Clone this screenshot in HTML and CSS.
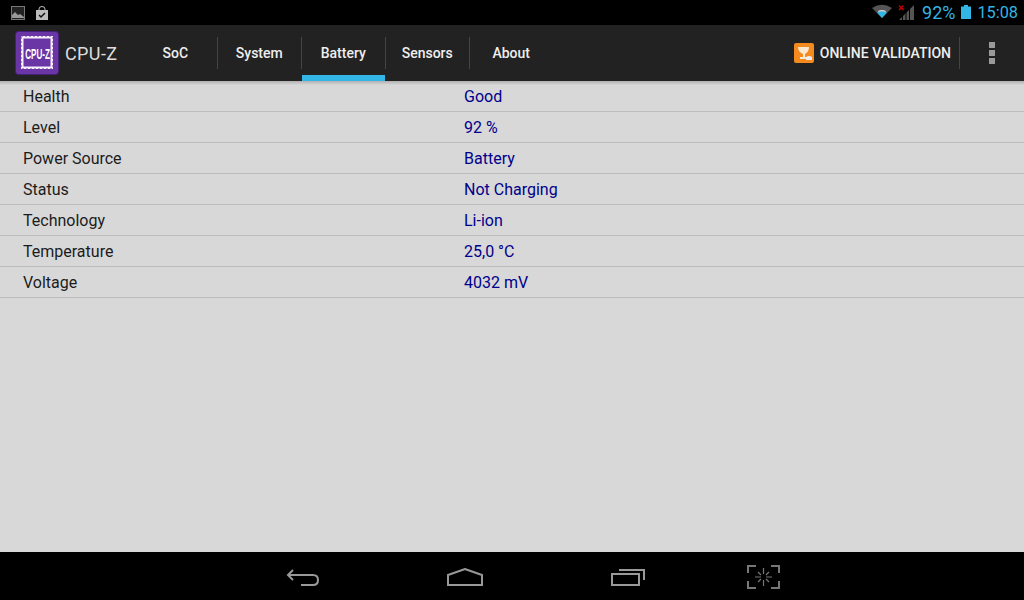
FILE: index.html
```html
<!DOCTYPE html>
<html lang="en">

<head>
    <meta charset="UTF-8">
    <title>CPU-Z</title>
    <link rel="stylesheet" href="styles.css">
</head>

<body>
    <div class="status-bar">
        <div class="status-left">
            <svg width="14" height="14" viewBox="0 0 14 14">
                <rect x="0.5" y="0.5" width="13" height="13" fill="#222" stroke="#777" />
                <path d="M1 12V9l3-3 3 3 2-1 4 3v1z" fill="#999" />
            </svg>
            <svg width="14" height="14" viewBox="0 0 14 14">
                <path d="M1 4h12v10H1z" fill="#bbb" />
                <path d="M4 5V3a3 2.500 0 0 1 6 0v2" fill="none" stroke="#bbb" />
                <path d="M4 9l2 2 4-4" fill="none" stroke="#111" stroke-width="1.500" />
            </svg>
        </div>
        <div class="status-right">
            <svg class="wifi" width="20" height="14" viewBox="0 0 20 14">
                <path d="M0 4Q10-2.500 20 4L10 14z" fill="#555" />
                <path d="M5 8.500Q10 5.500 15 8.500L10 14z" fill="#33b5e5" />
                <path d="M6 7Q10 5 14 7L13.500 8Q10 6.500 6.500 8z" fill="#ddd" />
            </svg>
            <svg class="signal" width="16" height="15" viewBox="0 0 16 15">
                <path d="M1 15L16 0v15z" fill="#555" />
                <path d="M4.500 15v-4M8 15V7M11.500 15V3" stroke="#000" stroke-width="1" />
                <path d="M1 0.500l4.500 4.500M5.500 0.500L1 5" stroke="#c00" stroke-width="1.400" />
            </svg>
            <span class="battery-pct">92%</span>
            <svg class="battery" width="10" height="14" viewBox="0 0 10 14">
                <path d="M3 0h4v1.500h3V14H0V1.500h3z" fill="#33b5e5" />
            </svg>
            <span class="clock">15:08</span>
        </div>
    </div>

    <div class="action-bar">
        <div class="brand">
            <svg class="logo" width="44" height="44" viewBox="0 0 44 44">
                <rect x="0.500" y="0.500" width="43" height="43" rx="3" fill="#6a35a5" stroke="#45207a" />
                <rect x="6" y="5" width="32" height="33" fill="#f4effa" />
                <rect x="8.500" y="7.500" width="27" height="28" fill="#6a35a5" />
                <rect x="6.500" y="5.500" width="31" height="32" fill="none" stroke="#6a35a5" stroke-width="1" stroke-dasharray="1 3" />
                <text transform="translate(22.500 27.500) scale(0.540 1)" text-anchor="middle" class="logo-text">CPU-Z</text>
            </svg>
            <span class="app-name">CPU-Z</span>
        </div>
        <nav class="tabs">
            <a class="tab">SoC</a>
            <a class="tab">System</a>
            <a class="tab tab-active">Battery</a>
            <a class="tab">Sensors</a>
            <a class="tab tab-last">About</a>
        </nav>
        <div class="actions">
            <a class="validate">
                <svg width="20" height="20" viewBox="0 0 20 20">
                    <rect width="20" height="20" rx="2" fill="#f58a1f" />
                    <path d="M4 4h11q0 5-4 7v3h3v2H6v-2h3v-3Q4 9 4 4z" fill="#fde9cf" />
                    <path d="M12 14q3-2 6 0v3h-6z" fill="#eee" />
                </svg>
                <span>ONLINE VALIDATION</span>
            </a>
            <div class="overflow">
                <i></i><i></i><i></i>
            </div>
        </div>
    </div>

    <div class="content">
        <div class="row"><span class="label">Health</span><span class="value">Good</span></div>
        <div class="row"><span class="label">Level</span><span class="value">92 %</span></div>
        <div class="row"><span class="label">Power Source</span><span class="value">Battery</span></div>
        <div class="row"><span class="label">Status</span><span class="value">Not Charging</span></div>
        <div class="row"><span class="label">Technology</span><span class="value">Li-ion</span></div>
        <div class="row"><span class="label">Temperature</span><span class="value">25,0 °C</span></div>
        <div class="row"><span class="label">Voltage</span><span class="value">4032 mV</span></div>
    </div>

    <div class="nav-bar">
        <svg width="34" height="18" viewBox="0 0 34 18">
            <path d="M2 7h25q5 0 5 5q0 5-5 5H15M7 2L2 7l5 5" fill="none" stroke="#999" stroke-width="2" />
        </svg>
        <svg width="37" height="18" viewBox="0 0 37 18">
            <path d="M1 7L18 1l17 6v10H1z" fill="none" stroke="#999" stroke-width="2" />
        </svg>
        <svg width="34" height="18" viewBox="0 0 34 18">
            <rect x="1" y="6" width="27" height="11" fill="none" stroke="#999" stroke-width="2" />
            <path d="M8 2h25v10" fill="none" stroke="#999" stroke-width="2" />
        </svg>
        <svg class="nav-scan" width="33" height="24" viewBox="0 0 33 24">
            <path d="M9 1H1v7M24 1h8v7M9 23H1v-7M24 23h8v-7" fill="none" stroke="#777" stroke-width="2" />
            <path d="M16.500 3v6M16.500 15v6M8 12h6M19 12h6M11 7l3 3M22 7l-3 3M11 17l3-3M22 17l-3-3" fill="none" stroke="#777" stroke-width="1.200" />
        </svg>
    </div>
</body>

</html>
```
FILE: styles.css
```css
* {
    margin: 0;
    padding: 0;
    box-sizing: border-box;
}

body {
    width: 1024px;
    height: 600px;
    display: flex;
    flex-direction: column;
    overflow: hidden;
    background: #d8d8d8;
    font-family: Roboto, sans-serif;
}

/* Status bar */
.status-bar {
    height: 25px;
    flex-shrink: 0;
    background: #000;
    display: flex;
    justify-content: space-between;
    align-items: center;
    padding: 0 6px 0 11px;
}

.status-left {
    display: flex;
    gap: 10px;
}

.status-right {
    display: flex;
    align-items: center;
    color: #33b5e5;
}

.wifi {
    margin: 0 6px 3px 0;
}

.signal {
    margin: 0 8px 1px 0;
}

.battery-pct {
    font-size: 18px;
}

.battery {
    margin: 0 6px 1px 6px;
}

.clock {
    font-size: 16.3px;
}

/* Action bar */
.action-bar {
    height: 56px;
    flex-shrink: 0;
    background: #222;
    display: flex;
    color: #eee;
}

.brand {
    width: 134px;
    display: flex;
    align-items: center;
    padding-left: 15px;
}

.logo {
    flex-shrink: 0;
}

.logo-text {
    font-family: "Liberation Sans", sans-serif;
    font-size: 15px;
    font-weight: bold;
    fill: #fff;
}

.app-name {
    margin-left: 6px;
    font-size: 18px;
    letter-spacing: 0.4px;
    color: #ddd;
}

.tabs {
    display: flex;
}

.tab {
    width: 84px;
    padding-right: 1.5px;
    display: flex;
    align-items: center;
    justify-content: center;
    font-size: 14px;
    font-weight: 500;
    position: relative;
}

.tab::after {
    content: "";
    position: absolute;
    right: 0;
    top: 12px;
    height: 32px;
    width: 1px;
    background: #444;
}

.tab-last::after {
    display: none;
}

.tab-active::before {
    content: "";
    position: absolute;
    left: 0;
    right: 1px;
    bottom: 0;
    height: 6px;
    background: #33b5e5;
}

.actions {
    margin-left: auto;
    display: flex;
    align-items: center;
}

.validate {
    display: flex;
    align-items: center;
    gap: 6px;
    height: 32px;
    padding-right: 8px;
    border-right: 1px solid #444;
    font-size: 14px;
    font-weight: 500;
}

.overflow {
    width: 64px;
    display: flex;
    flex-direction: column;
    align-items: center;
    gap: 2px;
}

.overflow i {
    width: 6px;
    height: 6px;
    background: #999;
}

/* Battery rows */
.content {
    flex: 1;
    background: linear-gradient(to bottom, #b0b0b0, #d8d8d8 4px);
}

.row {
    height: 31px;
    display: flex;
    align-items: center;
    padding-left: 23px;
    border-bottom: 1px solid #bdbdbd;
    font-size: 16px;
}

.label {
    width: 441px;
    color: #1c1c1c;
}

.value {
    color: #00008b;
}

/* Navigation bar */
.nav-bar {
    height: 48px;
    flex-shrink: 0;
    background: #000;
    display: flex;
    align-items: center;
    padding: 2px 0 0 286px;
    gap: 127px;
}

.nav-scan {
    margin-left: -25px;
}
```
